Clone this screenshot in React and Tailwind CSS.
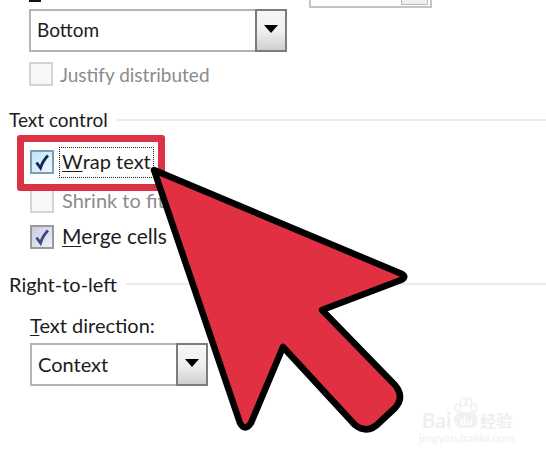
const font = { fontFamily: 'Lato,"Open Sans",sans-serif' };

function Check({ checked, disabled, focus }) {
  return (
    <span
      className={
        "relative flex h-[24px] w-[24px] shrink-0 items-center justify-center border-2 " +
        (disabled
          ? "border-[#d4d4d4] bg-[#f7f7f7]"
          : focus
          ? "border-[#7f9db0] bg-gradient-to-br from-[#bfe3f7] to-[#eef8fe]"
          : "border-[#9a9a9a] bg-gradient-to-br from-[#c9cbe0] to-[#f2f2f8]")
      }
    >
      {checked && (
        <svg width="18" height="18" viewBox="0 0 18 18">
          <path
            d="M3.5 9.5 L7.5 15 C9 10 11.5 6 15 2.5"
            fill="none"
            stroke={focus ? "#12245c" : "#3c4a80"}
            strokeWidth="2.8"
          />
        </svg>
      )}
    </span>
  );
}

function Select({ label, width, size }) {
  return (
    <div className="flex h-[43px] border-2 border-[#b4b4b4] bg-white" style={{ width }}>
      <div className={"flex flex-1 items-center pl-[6px] text-[#1c1c1c] " + size}>{label}</div>
      <div className="-my-[2px] -mr-[2px] flex w-[32px] items-start justify-center border-2 border-[#7c7c7c] bg-gradient-to-b from-[#f6f6f6] via-[#f0f0f0] to-[#cfcfcf] pt-[14px]">
        <span className="h-0 w-0 border-x-[7px] border-t-[8px] border-x-transparent border-t-black" />
      </div>
    </div>
  );
}

function Heading({ children, mt, size }) {
  return (
    <div className={"flex items-center gap-[9px] pl-[9px] leading-[28px] text-[#1c1c1c] " + size + " " + mt}>
      <span className="pt-[1px]">{children}</span>
      <span className="h-[2px] flex-1 bg-[#ececec]" />
    </div>
  );
}

export default function App() {
  return (
    <div className="relative h-[456px] w-[546px] overflow-hidden bg-white" style={font}>
      <div className="flex h-[9px] items-start">
        <span className="ml-[29px] h-[2px] w-[12px] bg-[#111]" />
        <span className="ml-[268px] flex h-[8px] w-[123px] justify-end border-x-2 border-b-2 border-[#c4c4c4] bg-white">
          <span className="mr-[2px] h-[5px] w-[27px] border-x border-b border-[#bbb] bg-[#eee]" />
        </span>
      </div>

      <div className="ml-[29px]">
        <Select label="Bottom" width="258px" size="text-[19px]" />
        <label className="mt-[10px] flex h-[24px] items-center gap-[7px] text-[19px] text-[#8b8b8b]">
          <Check disabled />
          <span className="pt-[2px]">Justify distributed</span>
        </label>
      </div>

      <Heading mt="mt-[19px]" size="text-[19px]">Text control</Heading>

      <div className="ml-[30px] mt-[13px] flex h-[30px] items-center">
        <Check checked focus />
        <span className="ml-[5px] flex h-[31px] w-[95px] items-center whitespace-nowrap border border-dotted border-[#222] pb-[2px] pl-[2px] text-[20px] text-[#1c1c1c]">
          <span className="underline decoration-1 underline-offset-2">W</span>rap text
        </span>
      </div>
      <div className="ml-[30px] mt-[12px] flex h-[24px] items-center gap-[8px] text-[20px] text-[#8b8b8b]">
        <Check disabled />
        <span className="pb-[2px]">Shrink to fit</span>
      </div>
      <div className="ml-[30px] mt-[12px] flex h-[24px] items-center gap-[8px] text-[21px] text-[#1c1c1c]">
        <Check checked />
        <span className="pb-[2px]">
          <span className="underline decoration-1 underline-offset-2">M</span>erge cells
        </span>
      </div>

      <Heading mt="mt-[20px]" size="text-[20px]">Right-to-left</Heading>

      <div className="ml-[30px] mt-[13px] text-[20px] leading-[28px] text-[#1c1c1c]">
        <span className="underline decoration-1 underline-offset-2">T</span>ext direction:
      </div>
      <div className="ml-[30px] mt-[4px]">
        <Select label="Context" width="178px" size="pb-[2px] text-[20px]" />
      </div>

      {/* red highlight around the checkbox */}
      <div className="absolute left-[17px] top-[135px] h-[56px] w-[148px] rounded-[3px] border-[7px] border-[#dc3245]" />

      {/* arrow */}
      <svg className="absolute left-0 top-0" width="546" height="456" viewBox="0 0 546 456">
        <path
          d="M154 170 L402 274 Q407 277 401 280 L322 310 L395 385 Q405 397 395 408 L380 422 Q368 435 355 425 L283 347 L251 423 Q245 432 240 423 Z"
          fill="#e03042"
          stroke="#000"
          strokeWidth="6.5"
          strokeLinejoin="round"
        />
      </svg>

      {/* watermark */}
      <div className="absolute left-[418px] top-[397px] flex w-[98px] flex-col items-center text-[#efefef]">
        <div className="flex h-[31px] items-end">
          <span className="text-[21px] font-bold leading-[16px]">Bai</span>
          <span className="relative ml-[3px] flex h-[16px] w-[24px] items-center justify-center rounded-full bg-[#f1f1f1] text-[11px] font-bold leading-none text-white">
            du
            <svg className="absolute -top-[16px] left-[0px]" width="24" height="18" viewBox="0 0 24 18">
              <g fill="none" stroke="#efefef" strokeWidth="1.5">
                <ellipse cx="4" cy="12" rx="2.5" ry="4" />
                <ellipse cx="9" cy="6" rx="2.5" ry="4" />
                <ellipse cx="15" cy="6" rx="2.5" ry="4" />
                <ellipse cx="20" cy="12" rx="2.5" ry="4" />
              </g>
            </svg>
          </span>
          <span
            className="ml-[2px] text-[16px] font-bold leading-[16px]"
            style={{ fontFamily: '"Noto Sans CJK SC",sans-serif' }}
          >
            经验
          </span>
        </div>
        <span className="mt-[4px] text-[12px] font-bold leading-[12px] text-[#f2f2f2]">jingyan.baidu.com</span>
      </div>
    </div>
  );
}
